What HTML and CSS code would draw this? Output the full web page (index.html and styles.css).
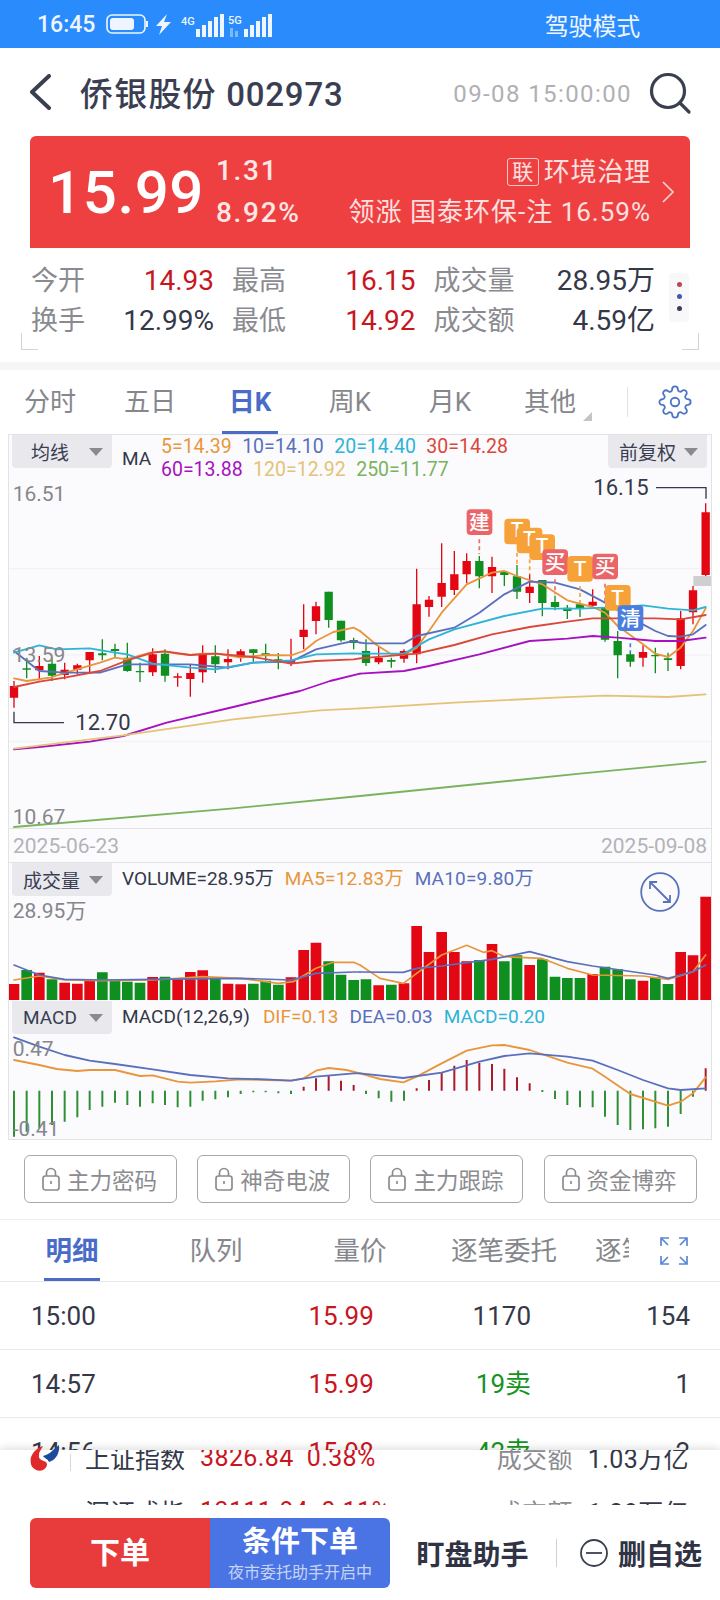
FILE: index.html
```html
<!DOCTYPE html>
<html lang="zh">
<head>
<meta charset="utf-8">
<title>侨银股份 002973</title>
<link rel="stylesheet" href="styles.css">
</head>
<body>
<div class="app">
  <div class="status">
    <span class="clock">16:45</span>
    <svg class="status-icons" width="170" height="28" viewBox="0 0 170 28">
      <rect x="1" y="1" width="38" height="18" rx="5" class="si-stroke"/>
      <rect x="4" y="4" width="24" height="12" rx="3" class="si-fill"/>
      <rect x="40" y="7" width="2" height="6" class="si-fill"/>
      <path d="M61 0 50 12h6l-3 9 12-13h-7l3-8z" class="si-fill"/>
      <text x="75" y="11" class="si-text">4G</text>
      <path d="M90 15h4v8h-4zM96 11h4v12h-4zM102 7h4v16h-4zM108 3h4v20h-4zM114 0h4v23h-4z" class="si-fill"/>
      <text x="122" y="10" class="si-text">5G</text>
      <path d="M124 14h3v9h-3zM129 17h3v6h-3z" class="si-dim"/>
      <path d="M138 15h4v8h-4zM144 11h4v12h-4zM150 7h4v16h-4zM156 3h4v20h-4zM162 0h4v23h-4z" class="si-fill"/>
    </svg>
    <span class="drive">驾驶模式</span>
  </div>

  <header class="head">
    <svg class="back" width="24" height="36" viewBox="0 0 24 36"><path d="M20 2 3 18l17 16"/></svg>
    <h1 class="title">侨银股份 <span class="code">002973</span></h1>
    <span class="stamp">09-08 15:00:00</span>
    <svg class="search" width="44" height="44" viewBox="0 0 44 44"><circle cx="20" cy="19" r="16.5"/><path d="m32 31 9 9"/></svg>
  </header>

  <section class="quote">
    <div class="price">15.99</div>
    <div class="delta"><span>1.31</span><span>8.92%</span></div>
    <div class="sector">
      <div class="sector-top"><span class="badge">联</span><span>环境治理</span></div>
      <div class="sector-sub">领涨 国泰环保-注 16.59%</div>
    </div>
    <svg class="more" width="12" height="22" viewBox="0 0 12 22"><path d="m1 1 10 10L1 21"/></svg>
  </section>

  <section class="stats">
    <div class="cell"><span class="lab">今开</span><span class="up">14.93</span></div>
    <div class="cell"><span class="lab">最高</span><span class="up">16.15</span></div>
    <div class="cell"><span class="lab">成交量</span><span class="dark">28.95万</span></div>
    <div class="cell"><span class="lab">换手</span><span class="dark">12.99%</span></div>
    <div class="cell"><span class="lab">最低</span><span class="up">14.92</span></div>
    <div class="cell"><span class="lab">成交额</span><span class="dark">4.59亿</span></div>
    <div class="dots"><i class="dot-r"></i><i class="dot-b"></i><i class="dot-k"></i></div>
    <i class="corner corner-l"></i><i class="corner corner-r"></i>
  </section>

  <div class="gap"></div>

  <nav class="periods">
    <span class="period">分时</span>
    <span class="period">五日</span>
    <span class="period active">日K</span>
    <span class="period">周K</span>
    <span class="period">月K</span>
    <span class="period other">其他</span>
    <i class="vline"></i>
    <svg class="gear" width="34" height="34" viewBox="0 0 24 24"><circle cx="12" cy="12" r="3"/><path d="M19.4 15a1.65 1.65 0 0 0 .33 1.82l.06.06a2 2 0 0 1 0 2.83 2 2 0 0 1-2.83 0l-.06-.06a1.65 1.65 0 0 0-1.82-.33 1.65 1.65 0 0 0-1 1.51V21a2 2 0 0 1-2 2 2 2 0 0 1-2-2v-.09A1.65 1.65 0 0 0 9 19.4a1.65 1.65 0 0 0-1.82.33l-.06.06a2 2 0 0 1-2.83 0 2 2 0 0 1 0-2.83l.06-.06a1.65 1.65 0 0 0 .33-1.82 1.65 1.65 0 0 0-1.51-1H3a2 2 0 0 1-2-2 2 2 0 0 1 2-2h.09A1.65 1.65 0 0 0 4.6 9a1.65 1.65 0 0 0-.33-1.82l-.06-.06a2 2 0 0 1 0-2.83 2 2 0 0 1 2.83 0l.06.06a1.65 1.65 0 0 0 1.82.33H9a1.65 1.65 0 0 0 1-1.51V3a2 2 0 0 1 2-2 2 2 0 0 1 2 2v.09a1.65 1.65 0 0 0 1 1.51 1.65 1.65 0 0 0 1.82-.33l.06-.06a2 2 0 0 1 2.83 0 2 2 0 0 1 0 2.83l-.06.06a1.65 1.65 0 0 0-.33 1.82V9a1.65 1.65 0 0 0 1.51 1H21a2 2 0 0 1 2 2 2 2 0 0 1-2 2h-.09a1.65 1.65 0 0 0-1.51 1z"/></svg>
  </nav>

  <section class="chart">
    <div class="pane pane-k">
      <svg class="plot" width="702" height="393" viewBox="27 -108 2106 1179">
        <path class="grid" d="M27 293H2133M27 552H2133M27 812H2133"/>
        <g>
          <path class="wick-r" d="M42 630V710M118 555V628M194 575V625M232 578V610M269 543V604M458 532V615M533 607V647M571 580V677M608 523V635M684 535V595M722 535V572M873 503V585M911 400V535M948 392V490"/>
          <path class="body-r" d="M42 645V680M118 585V598M194 596V612M232 583V596M269 543V568M458 550V604M533 616V620M571 606V624M608 548V604M684 564V574M722 541V558M873 568V575M911 476V498M948 406V450"/>
          <path class="wick-g" d="M80 560V622M156 560V630M307 505V568M345 518V560M382 515V602M420 575V633M495 535V632M646 523V606M760 535V572M797 518V570M835 546V595M986 362V470M1023 449V512M1061 500V535"/>
          <path class="body-g" d="M80 592V596M156 578V614M307 547V553M345 534V540M382 560V600M420 600V604M495 548V614M646 556V580M760 535V546M797 547V555M835 565V571M986 362V447M1023 449V508M1061 507V516"/>
        </g>
        <g transform="translate(1080 0)">
          <path class="wick-r" d="M56 525V580M132 535V575M170 293V577M207 375V437M245 217V408M283 240V372M320 247V337M396 257V366M509 310V396M698 355V412M849 523V587M962 420V595M999 345V460M1037 97V315"/>
          <path class="body-r" d="M56 560V574M132 540V563M170 400V550M207 386V408M245 336V377M283 310V357M320 270V310M396 288V316M509 347V366M698 392V404M849 543V560M962 442V585M999 358V424M1037 124V312"/>
          <path class="wick-g" d="M18 505V585M94 560V590M358 255V352M433 300V345M471 282V384M547 327V436M585 374V418M622 402V444M660 395V438M735 408V512M773 480V622M811 543V587M886 530V607M924 545V600"/>
          <path class="body-g" d="M18 540V576M94 567V572M358 270V316M433 303V312M471 316V362M547 327V396M585 393V408M622 410V420M660 400V412M735 408V506M773 510V553M811 550V572M886 552V556M924 562V567"/>
        </g>
        <polyline class="l-5" points="42,622 80,630 150,620 230,595 300,575 345,560 380,565 450,545 490,541 530,548 571,552 608,548 650,548 722,560 797,552 873,553 911,540 948,510 1000,483 1061,470 1080,480"/>
        <polyline class="l-10" points="42,540 118,600 194,605 300,605 382,580 458,580 571,580 684,590 760,575 873,572 948,535 1023,518 1061,510 1080,515"/>
        <polyline class="l-20" points="42,545 118,523 170,535 269,532 345,545 382,550 458,578 571,590 646,595 760,575 873,568 948,550 1061,547 1080,548"/>
        <polyline class="l-30" points="42,648 118,632 194,620 300,600 382,568 458,545 495,541 571,552 646,548 760,558 873,578 948,570 1061,565 1080,562"/>
        <polyline class="l-60" points="42,835 118,828 270,812 370,795 500,755 700,708 900,660 990,630 1080,608"/>
        <polyline class="l-120" points="42,833 370,793 700,745 960,718 1080,712"/>
        <polyline class="l-250" points="42,1068 700,1012 1080,975"/>
        <g transform="translate(1080 0)">
          <polyline class="l-5" points="0,480 50,522 94,550 132,552 170,530 207,480 245,425 320,340 396,305 433,300 471,315 547,340 622,388 698,408 735,425 773,465 849,520 886,548 924,558 962,530 999,480 1037,412"/>
          <polyline class="l-10" points="0,515 18,517 132,517 170,495 283,470 358,425 433,370 509,332 585,335 660,355 735,395 811,440 886,480 924,495 962,497 999,490 1037,462"/>
          <polyline class="l-20" points="0,548 132,548 207,505 283,475 433,435 547,413 660,413 735,410 849,403 924,413 999,418 1037,408"/>
          <polyline class="l-30" points="0,562 170,548 283,522 396,490 509,468 622,452 698,442 773,442 886,442 962,445 1037,432"/>
          <polyline class="l-60" points="0,608 132,600 207,585 358,550 509,510 622,503 698,495 773,500 886,510 962,510 1037,500"/>
          <polyline class="l-120" points="0,712 283,695 585,680 735,674 924,678 1037,670"/>
          <polyline class="l-250" points="0,975 660,908 1037,872"/>
          <path class="dash-r" d="M358 205V250M585 325V370M735 338V390"/>
          <path class="dash-o" d="M471 245V282M509 265V310M660 345V395"/>
          <path class="dash-b" d="M811 517V545"/>
          <rect class="tag-grey" x="1000" y="315" width="53" height="30"/>
          <rect class="tag-r" x="320" y="115" width="77" height="77" rx="12"/><text class="tag-t" x="358" y="176">建</text>
          <rect class="tag-o" x="433" y="143" width="77" height="77" rx="12"/><text class="tag-t" x="471" y="198">T</text>
          <rect class="tag-o" x="470" y="170" width="77" height="77" rx="12"/><text class="tag-t" x="508" y="225">T</text>
          <rect class="tag-o" x="508" y="190" width="77" height="77" rx="12"/><text class="tag-t" x="546" y="245">T</text>
          <rect class="tag-r" x="547" y="235" width="77" height="77" rx="12"/><text class="tag-t" x="585" y="296">买</text>
          <rect class="tag-o" x="622" y="255" width="77" height="77" rx="12"/><text class="tag-t" x="660" y="315">T</text>
          <rect class="tag-r" x="697" y="248" width="77" height="77" rx="12"/><text class="tag-t" x="735" y="309">买</text>
          <rect class="tag-o" x="735" y="342" width="77" height="77" rx="12"/><text class="tag-t" x="773" y="402">T</text>
          <rect class="tag-b" x="773" y="403" width="77" height="77" rx="12"/><text class="tag-t" x="811" y="464">清</text>
        </g>
        <path class="mark" d="M42 722V755H192M1968 50H2118V83"/>
        <text class="axis" x="38" y="90">16.51</text>
        <text class="axis" x="38" y="573">13.59</text>
        <text class="axis" x="38" y="1060">10.67</text>
        <text class="peak" x="226" y="777">12.70</text>
        <text class="peak" x="1780" y="72">16.15</text>
      </svg>
      <div class="pill pill-l"><span>均线</span><i class="tri"></i></div>
      <span class="ma-name">MA</span>
      <div class="legend">
        <div class="legend-row"><span class="c-5">5=14.39</span><span class="c-10">10=14.10</span><span class="c-20">20=14.40</span><span class="c-30">30=14.28</span></div>
        <div class="legend-row"><span class="c-60">60=13.88</span><span class="c-120">120=12.92</span><span class="c-250">250=11.77</span></div>
      </div>
      <div class="pill pill-r"><span>前复权</span><i class="tri"></i></div>
    </div>

    <div class="dates"><span>2025-06-23</span><span>2025-09-08</span></div>

    <div class="pane pane-v">
      <svg class="plot" width="702" height="138" viewBox="27 66 2106 414">
        <path class="vol-r" d="M42 432V480M118 398V480M194 428V480M232 431V480M269 421V480M458 411V480M533 418V480M571 396V480M608 391V480M684 431V480M722 433V480M873 412V480M911 330V480M948 308V480"/>
        <path class="vol-g" d="M80 390V480M156 418V480M307 397V480M345 422V480M382 425V480M420 428V480M495 410V480M646 415V480M760 431V480M797 422V480M835 434V480M986 364V480M1023 404V480M1061 420V480"/>
        <g transform="translate(1080 0)">
          <path class="vol-r" d="M56 436V480M132 430V480M170 258V480M207 336V480M245 276V480M283 336V480M320 364V480M396 312V480M509 375V480M698 402V480M849 422V480M962 336V480M999 346V480M1037 170V480"/>
          <path class="vol-g" d="M18 418V480M94 434V480M358 360V480M433 364V480M471 346V480M547 358V480M585 410V480M622 414V480M660 414V480M735 380V480M773 388V480M811 418V480M886 412V480M924 432V480"/>
          <polyline class="l-5 thin" points="0,375 60,415 130,430 170,400 245,345 320,316 370,337 396,332 433,350 545,355 622,385 698,405 849,408 924,418 999,395 1037,345"/>
          <polyline class="l-10 thin" points="0,396 130,397 170,385 245,378 396,358 509,335 622,365 698,378 885,405 924,415 999,395 1037,375"/>
        </g>
        <polyline class="l-5 thin" points="42,420 118,408 194,420 307,422 458,420 608,410 722,415 835,430 880,425 948,385 1000,367 1061,367 1080,375"/>
        <polyline class="l-10 thin" points="42,375 118,405 194,418 307,420 458,418 722,415 873,420 948,400 1061,396 1080,396"/>
        <text class="axis" x="38" y="234">28.95万</text>
      </svg>
      <div class="pill pill-l"><span>成交量</span><i class="tri"></i></div>
      <div class="ind">
        <span class="c-k">VOLUME=28.95万</span><span class="c-5">MA5=12.83万</span><span class="c-10">MA10=9.80万</span>
      </div>
      <svg class="zoom-btn" width="40" height="40" viewBox="0 0 40 40"><circle cx="20" cy="20" r="18.8"/><path d="M10 10 30 30M10 17v-7h7M30 23v7h-7"/></svg>
    </div>

    <div class="pane pane-m">
      <svg class="plot" width="702" height="139" viewBox="27 480 2106 417">
        <path class="bar-g" d="M42 752V890M80 752V875M118 752V865M156 752V855M194 752V845M232 752V832M269 752V810M307 752V800M345 752V788M382 752V795M420 752V800M458 752V790M495 752V795M533 752V802M571 752V800M608 752V782M646 752V778M684 752V772M722 752V762M760 752V757M797 752V757M835 754V760M873 752V762"/>
        <path class="bar-r" d="M911 740V752M948 715V752M986 708V752M1023 722V752M1061 735V752"/>
        <g transform="translate(1080 0)">
          <path class="bar-g" d="M18 752V762M56 752V775M94 752V785M132 752V782M585 752V777M622 752V795M660 752V802M698 752V802M735 752V830M773 752V855M811 752V870M849 752V868M886 752V865M924 752V860M962 752V822M999 752V770"/>
          <path class="bar-r" d="M170 745V752M207 720V752M245 697V752M283 677V752M320 660V752M358 668V752M396 672V752M433 686V752M471 712V752M509 730V752M1037 685V752"/>
          <path class="bar-g" d="M547 750V756"/>
          <polyline class="l-5" points="0,700 60,717 130,727 170,710 245,670 320,632 396,616 433,615 509,630 622,668 698,686 735,710 811,762 924,797 962,785 999,760 1037,712"/>
          <polyline class="l-10" points="0,700 130,714 245,698 358,665 433,648 509,640 622,650 698,662 773,690 849,720 924,745 962,750 1037,745"/>
        </g>
        <polyline class="l-5" points="42,660 118,675 170,687 232,693 269,690 345,690 420,708 458,706 533,725 571,728 646,724 722,718 797,720 873,722 911,715 948,692 986,684 1040,690 1080,700"/>
        <polyline class="l-10" points="42,592 118,620 194,645 269,662 345,672 458,688 571,705 684,715 797,718 873,722 948,710 1061,700 1080,700"/>
        <text class="axis" x="38" y="648">0.47</text>
        <text class="axis" x="38" y="888">-0.41</text>
      </svg>
      <div class="pill pill-l"><span>MACD</span><i class="tri"></i></div>
      <div class="ind">
        <span class="c-k">MACD(12,26,9)</span><span class="c-5">DIF=0.13</span><span class="c-10">DEA=0.03</span><span class="c-20">MACD=0.20</span>
      </div>
    </div>
  </section>

  <section class="locks">
    <div class="lock"><svg width="20" height="24" viewBox="0 0 20 24"><rect x="2" y="9" width="16" height="14" rx="2.5"/><path d="M5.5 9V6a4.5 4.5 0 0 1 9 0v3M10 14v3"/></svg>主力密码</div>
    <div class="lock"><svg width="20" height="24" viewBox="0 0 20 24"><rect x="2" y="9" width="16" height="14" rx="2.5"/><path d="M5.5 9V6a4.5 4.5 0 0 1 9 0v3M10 14v3"/></svg>神奇电波</div>
    <div class="lock"><svg width="20" height="24" viewBox="0 0 20 24"><rect x="2" y="9" width="16" height="14" rx="2.5"/><path d="M5.5 9V6a4.5 4.5 0 0 1 9 0v3M10 14v3"/></svg>主力跟踪</div>
    <div class="lock"><svg width="20" height="24" viewBox="0 0 20 24"><rect x="2" y="9" width="16" height="14" rx="2.5"/><path d="M5.5 9V6a4.5 4.5 0 0 1 9 0v3M10 14v3"/></svg>资金博弈</div>
  </section>

  <nav class="detail-tabs">
    <div class="detail-scroll">
      <span class="dtab active">明细</span>
      <span class="dtab">队列</span>
      <span class="dtab">量价</span>
      <span class="dtab">逐笔委托</span>
      <span class="dtab">逐笔成交</span>
    </div>
    <svg class="expand" width="28" height="28" viewBox="0 0 28 28"><path d="M1 9V1h8M1 1l7 7M27 9V1h-8M27 1l-7 7M1 19v8h8M1 27l7-7M27 19v8h-8M27 27l-7-7"/></svg>
  </nav>

  <section class="ticks">
    <div class="tick-row"><span>15:00</span><span class="up">15.99</span><span class="r">1170</span><span class="r">154</span></div>
    <div class="tick-row"><span>14:57</span><span class="up">15.99</span><span class="r green">19卖</span><span class="r">1</span></div>
    <div class="tick-row"><span>14:56</span><span class="up">15.98</span><span class="r green">42卖</span><span class="r">2</span></div>
  </section>

  <footer class="dock">
    <svg class="logo" width="30" height="26" viewBox="0 0 30 26"><path d="M13 1C4 4-1 12 1 19c1 5 7 8 12 6 4-2 5-6 3-8-3-2-8-2-7-7 0-4 3-6 4-9z" class="logo-r"/><path d="M29 0c1 8-3 15-10 17-1-3-5-4-6-6 3-1 6-2 9-5 2-2 5-4 7-6z" class="logo-b"/></svg>
    <div class="index-view">
      <div class="index-row">
        <span class="index-name">上证指数</span><span class="up">3826.84</span><span class="up">0.38%</span>
        <span class="index-side"><span class="lab">成交额</span><span class="dark">1.03万亿</span></span>
      </div>
      <div class="index-row">
        <span class="index-name">深证成指</span><span class="up">13111.84</span><span class="up">0.11%</span>
        <span class="index-side"><span class="lab">成交额</span><span class="dark">1.28万亿</span></span>
      </div>
    </div>
    <div class="actions">
      <div class="order">
        <div class="order-main">下单</div>
        <div class="order-cond"><strong>条件下单</strong><small>夜市委托助手开启中</small></div>
      </div>
      <span class="act-text">盯盘助手</span>
      <i class="act-line"></i>
      <svg class="minus" width="30" height="30" viewBox="0 0 30 30"><circle cx="15" cy="15" r="13"/><path d="M7 15h16"/></svg>
      <span class="act-text">删自选</span>
    </div>
  </footer>
</div>
</body>
</html>
```

FILE: styles.css
```css
* { box-sizing: border-box; }
html, body { margin: 0; padding: 0; background: #fff; }
body { font-family: Roboto, "Noto Sans CJK SC", sans-serif; color: #343849; }
.app { position: relative; width: 720px; height: 1600px; overflow: hidden; background: #fff; }
i { display: block; font-style: normal; }
.up { color: #c8161f; }
.dark { color: #343849; }
.lab { color: #8a8b90; }

.status { display: flex; align-items: center; height: 48px; padding-left: 37px; background: #2a8bfd; color: #eef5ff; }
.clock { font-size: 23px; font-weight: 500; width: 69px; }
.status-icons { margin-top: 8px; }
.si-stroke { fill: none; stroke: #eef5ff; stroke-width: 1.6; }
.si-fill { fill: #eef5ff; }
.si-dim { fill: #7fb9fb; }
.si-text { fill: #eef5ff; font-size: 11px; font-weight: 500; }
.drive { margin-left: auto; margin-right: 80px; font-size: 24px; letter-spacing: -.2px; }

.head { display: flex; align-items: center; height: 88px; padding-left: 29px; }
.back { fill: none; stroke: #3a4050; stroke-width: 4; stroke-linecap: round; stroke-linejoin: round; }
.title { margin: 0 0 0 27px; font-size: 33px; font-weight: 500; color: #3a3e52; letter-spacing: 1.2px; white-space: nowrap; }
.code { letter-spacing: .8px; }
.stamp { margin: 3px 0 0 auto; font-size: 24px; color: #b0b0b4; letter-spacing: 1.4px; }
.search { margin: 3px 28px 0 16px; fill: none; stroke: #3a4050; stroke-width: 3.2; stroke-linecap: round; }

.quote { display: flex; align-items: center; height: 112px; margin: 0 30px; padding-left: 18px; background: #ee4040; border-radius: 6px 6px 0 0; color: #fff; }
.price { font-size: 60px; font-weight: 500; letter-spacing: .6px; width: 168px; }
.delta { display: flex; flex-direction: column; gap: 12px; font-size: 28px; font-weight: 500; letter-spacing: 1.7px; line-height: 30px; color: #fde6e6; }
.sector { margin-left: auto; display: flex; flex-direction: column; align-items: flex-end; gap: 10px; color: #fde0e0; }
.sector-top { display: flex; align-items: center; gap: 5px; font-size: 26px; letter-spacing: .8px; line-height: 30px; }
.badge { display: flex; align-items: center; justify-content: center; width: 32px; height: 28px; border: 1px solid #fbc8c8; border-radius: 3px; font-size: 21px; letter-spacing: 0; }
.sector-sub { font-size: 26px; letter-spacing: 1px; line-height: 30px; white-space: nowrap; }
.more { margin: 0 16px 0 11px; fill: none; stroke: #fbd0d0; stroke-width: 1.6; }

.stats { position: relative; display: grid; grid-template-columns: 183px 183.5px 221.5px; grid-auto-rows: 40px; align-content: start; column-gap: 18px; height: 114px; padding: 13px 0 0 31px; font-size: 28px; line-height: 40px; }
.cell { display: flex; justify-content: space-between; white-space: nowrap; height: 40px; }
.cell .lab { font-size: 27px; }
.dots { position: absolute; left: 669px; top: 25px; display: flex; flex-direction: column; align-items: center; gap: 7px; width: 20px; height: 49px; padding-top: 9px; background: #f8f8fb; border-radius: 4px; }
.dots i { width: 5px; height: 5px; border-radius: 50%; }
.dot-r { background: #b8474c; }
.dot-b { background: #3e5aa8; }
.dot-k { background: #3a3e52; }
.corner { position: absolute; top: 85px; width: 17px; height: 17px; border-bottom: 1.5px solid #d4d4d8; }
.corner-l { left: 21px; border-left: 1.5px solid #d4d4d8; }
.corner-r { left: 682px; border-right: 1.5px solid #d4d4d8; }

.gap { height: 8px; background: #f6f6f8; }

.periods { display: flex; align-items: center; height: 64px; font-size: 26px; color: #86878c; }
.period { position: relative; width: 100px; height: 64px; line-height: 64px; text-align: center; }
.period.active { color: #4a6cc8; font-weight: 700; }
.period.active::after { content: ""; position: absolute; left: 22px; bottom: 0; width: 56px; height: 3px; background: #4a6cc8; }
.other::after { content: ""; position: absolute; left: 83px; top: 42px; border-style: solid; border-width: 0 0 9px 9px; border-color: transparent transparent #c4c4c8 transparent; }
.vline { width: 1px; height: 30px; margin-left: 27px; background: #e2e2e6; }
.gear { margin-left: 30px; fill: none; stroke: #4d74c8; stroke-width: 1.3; }

.chart { width: 704px; margin-left: 8px; border: 1px solid #e3e3e6; background: #fbfbfd; height: 706px; }
.pane { position: relative; width: 702px; }
.pane-k { height: 393px; }
.pane-v { height: 138px; border-top: 1px solid #e3e3e6; }
.pane-m { height: 139px; }
.plot { display: block; }
.pane-v .plot { margin-top: -1px; }
.grid { fill: none; stroke: #f0f0f3; stroke-width: 3; }
.wick-r, .wick-g { fill: none; stroke-width: 4; }
.body-r, .body-g { fill: none; stroke-width: 25; }
.wick-r, .body-r { stroke: #e30613; }
.wick-g, .body-g { stroke: #0f8f1f; }
.vol-r, .vol-g { fill: none; stroke-width: 32; }
.vol-r { stroke: #e30613; }
.vol-g { stroke: #0f8f1f; }
.bar-r, .bar-g { fill: none; stroke-width: 6; }
.bar-r { stroke: #a81c2c; }
.bar-g { stroke: #2f8f34; }
polyline { fill: none; stroke-width: 5.5; stroke-linejoin: round; stroke-linecap: round; }
polyline.thin { stroke-width: 5; }
.l-5 { stroke: #e8963c; }
.l-10 { stroke: #5a70bc; }
.l-20 { stroke: #2eb4d6; }
.l-30 { stroke: #d9483a; }
.l-60 { stroke: #a612bf; }
.l-120 { stroke: #e3c377; }
.l-250 { stroke: #7ab35e; }
.dash-r, .dash-o, .dash-b { fill: none; stroke-width: 5; stroke-dasharray: 12 9; }
.dash-r { stroke: #ea6b6f; }
.dash-o { stroke: #f7a238; }
.dash-b { stroke: #4a7de0; }
.tag-r { fill: #ea6468; }
.tag-o { fill: #f7a238; }
.tag-b { fill: #4a7de0; }
.tag-grey { fill: #cfcfd2; }
.tag-t { fill: #fff; font-size: 62px; text-anchor: middle; font-weight: 500; }
.mark { fill: none; stroke: #343849; stroke-width: 4; }
.axis { fill: #86878c; font-size: 63px; }
.peak { fill: #343849; font-size: 66px; }

.pill { position: absolute; top: 0; display: flex; align-items: center; height: 33px; background: #e9e9ed; border-radius: 0 0 4px 4px; font-size: 19px; color: #3a3e52; }
.pill-l { left: 3px; width: 100px; padding-left: 19px; }
.pill-r { right: 4px; width: 99px; padding-left: 11px; }
.tri { position: absolute; right: 9px; top: 13px; border-style: solid; border-width: 8px 7.5px 0 7.5px; border-color: #8a8b90 transparent transparent transparent; }
.ma-name { position: absolute; left: 113px; top: 12px; font-size: 19px; line-height: 23px; color: #343849; }
.legend { position: absolute; left: 152px; top: 0; font-size: 19.5px; line-height: 23px; }
.legend-row { display: flex; gap: 10.5px; white-space: nowrap; }
.c-5 { color: #e8963c; }
.c-10 { color: #5a70bc; }
.c-20 { color: #2eb4d6; }
.c-30 { color: #d9483a; }
.c-60 { color: #a612bf; }
.c-120 { color: #e3c377; }
.c-250 { color: #7ab35e; }
.c-k { color: #343849; }

.dates { display: flex; justify-content: space-between; height: 34px; padding: 0 4px; border-top: 1px solid #e3e3e6; line-height: 34px; font-size: 21px; color: #b3b3b7; }

.ind { position: absolute; left: 113px; top: 4px; display: flex; gap: 11px; font-size: 19px; line-height: 23px; white-space: nowrap; }
.pane-m .ind { top: 5px; }
.pane-m .pill { top: 1px; }
.pane-v .pill-l, .pane-m .pill-l { padding-left: 11px; }
.pane-v .ind span + span { letter-spacing: .2px; }
.pane-m .ind .c-5 { margin-left: 2px; }
.zoom-btn { position: absolute; left: 631px; top: 9px; fill: none; stroke: #5872bb; stroke-width: 1.8; }

.locks { display: flex; gap: 20.2px; height: 80px; padding: 15px 0 0 24px; border-bottom: 1px solid #eeeef0; }
.lock { display: flex; align-items: center; gap: 6px; width: 153px; height: 48px; padding-left: 16px; border: 1px solid #a8a8ac; border-radius: 6px; font-size: 22.5px; color: #8c8c90; white-space: nowrap; }
.lock svg { fill: none; stroke: #8c8c90; stroke-width: 1.7; flex: none; }

.detail-tabs { display: flex; align-items: center; height: 62px; border-bottom: 1px solid #e8e8ea; }
.detail-scroll { display: flex; flex: 0 0 629px; overflow: hidden; height: 61px; }
.dtab { position: relative; flex: 0 0 144px; text-align: center; line-height: 61px; font-size: 26.5px; color: #86878c; white-space: nowrap; }
.dtab.active { color: #4a6cc8; font-weight: 700; }
.dtab.active::after { content: ""; position: absolute; left: 44px; bottom: 0; width: 56px; height: 3px; background: #4a6cc8; }
.expand { margin-left: 31px; fill: none; stroke: #5a86d8; stroke-width: 1.7; }

.tick-row { display: grid; grid-template-columns: 277.5px 66px 156.5px 159px; height: 68px; padding-left: 31px; border-bottom: 1px solid #ebebed; line-height: 68px; font-size: 26px; color: #343849; white-space: nowrap; }
.tick-row .up { color: #c8161f; }
.r { text-align: right; }
.green { color: #16931f; }

.dock { position: absolute; left: 0; right: 0; bottom: 0; height: 150px; background: #fff; box-shadow: 0 -2px 8px rgba(0,0,0,.13); }
.logo { position: absolute; left: 30px; top: -5px; }
.logo-r { fill: #e02a2a; }
.logo-b { fill: #1d4a9c; }
.index-view { height: 55px; overflow: hidden; }
.index-row { display: flex; align-items: center; height: 54px; margin-top: -20px; padding: 0 31px 0 85px; font-size: 25px; letter-spacing: .4px; white-space: nowrap; }
.index-row + .index-row { margin-top: 0; }
.index-row:first-child::before { content: ""; position: absolute; left: 70px; top: 4px; width: 1px; height: 17px; background: #d8d8dc; }
.index-name { width: 115px; color: #343849; letter-spacing: 0; }
.index-row .up + .up { margin-left: 13px; }
.index-side { display: flex; gap: 15px; margin-left: auto; }
.actions { display: flex; align-items: center; height: 70px; margin-top: 13px; padding-left: 30px; }
.order { display: flex; width: 360px; height: 70px; border-radius: 6px; overflow: hidden; color: #fff; }
.order-main { flex: 0 0 180px; background: #e83c3c; line-height: 70px; text-align: center; font-size: 30px; font-weight: 700; }
.order-cond { flex: 1; display: flex; flex-direction: column; align-items: center; background: #4a74e4; padding-top: 5px; }
.order-cond strong { font-size: 29px; line-height: 38px; font-weight: 700; }
.order-cond small { font-size: 16px; line-height: 24px; color: #c5d3f5; }
.act-text { font-size: 28px; font-weight: 700; color: #2f3344; white-space: nowrap; }
.order + .act-text { margin-left: 26.5px; }
.act-line { width: 1.5px; height: 28px; margin: 0 22px 0 27px; background: #d0d0d4; }
.minus { margin-right: 9px; fill: none; stroke: #3a4050; stroke-width: 1.8; }
```
